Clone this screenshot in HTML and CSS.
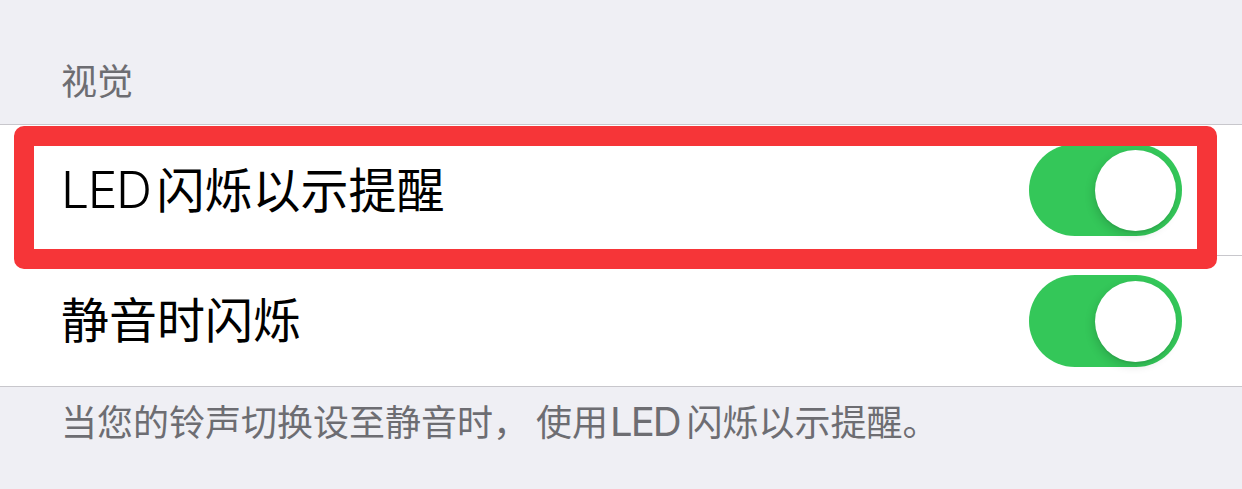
FILE: index.html
```html
<!DOCTYPE html>
<html lang="zh-CN">
<head>
<meta charset="utf-8">
<link rel="stylesheet" href="styles.css">
</head>
<body>
<div class="page">
  <div class="section-header">视觉</div>
  <div class="group">
    <div class="row">
      <div class="row-inner">
        <span class="label"><span class="latin">LED</span>闪烁以示提醒</span>
        <div class="toggle"><div class="knob"></div></div>
      </div>
    </div>
    <div class="row">
      <div class="row-inner sep">
        <span class="label">静音时闪烁</span>
        <div class="toggle"><div class="knob"></div></div>
      </div>
    </div>
  </div>
  <div class="section-footer">当您的铃声切换设至静音时<span class="punct">，</span>使用<span class="latin">LED</span>闪烁以示提醒。</div>
  <div class="highlight"></div>
</div>
</body>
</html>
```
FILE: styles.css
```css
html, body {
  margin: 0;
  padding: 0;
  background: #efeff4;
}
.page {
  position: relative;
  width: 1242px;
  height: 489px;
  overflow: hidden;
  font-family: Inter, "Noto Sans CJK SC", sans-serif;
}
.section-header {
  height: 124px;
  box-sizing: border-box;
  padding: 64px 0 0 61px;
  font-size: 36px;
  line-height: 36px;
  color: #6d6d72;
}
.group {
  background: #fff;
  border-top: 1px solid #c8c7cc;
  border-bottom: 1px solid #c8c7cc;
}
.row {
  padding-left: 61px;
}
.row-inner {
  height: 130px;
  display: flex;
  align-items: center;
  justify-content: space-between;
  padding-right: 60px;
}
.row-inner.sep {
  border-top: 1px solid #c8c7cc;
}
.label {
  font-size: 48px;
  line-height: 48px;
  color: #000;
}
.label .latin {
  font-size: 50px;
  font-weight: 300;
  letter-spacing: -1.5px;
  margin-right: 6px;
}
.toggle {
  width: 153px;
  height: 92px;
  box-sizing: border-box;
  border-radius: 46px;
  background: #34c759;
  display: flex;
  align-items: center;
  justify-content: flex-end;
  padding-right: 6px;
}
.knob {
  width: 81px;
  height: 81px;
  border-radius: 50%;
  background: #fff;
  box-shadow: -2px 4px 10px rgba(0, 0, 0, 0.14), 0 2px 1px rgba(0, 0, 0, 0.05);
}
.section-footer {
  padding: 17px 0 0 61px;
  font-size: 36px;
  line-height: 36px;
  color: #6d6d72;
}
.section-footer .punct {
  margin-right: 7px;
}
.section-footer .latin {
  font-size: 40px;
  letter-spacing: -2px;
  margin: 0 7px 0 2px;
}
.highlight {
  position: absolute;
  left: 14px;
  top: 126px;
  width: 1203px;
  height: 143px;
  box-sizing: border-box;
  border: 20px solid #f63538;
  border-radius: 10px;
}
```
